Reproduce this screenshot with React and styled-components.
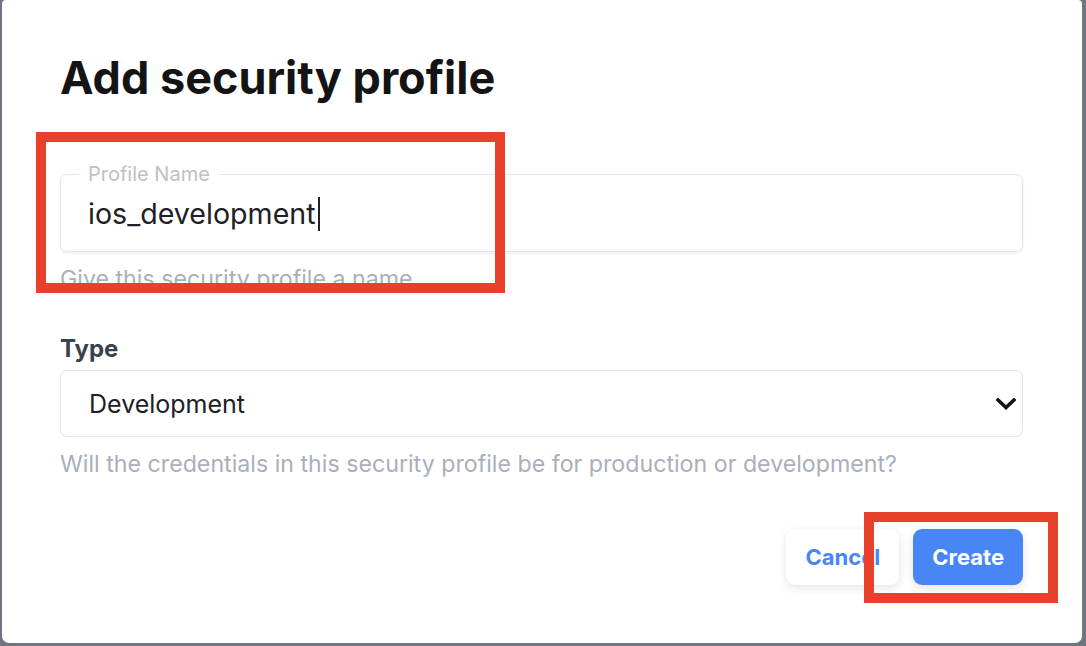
import React from "react";
import styled, { createGlobalStyle } from "styled-components";

const GlobalStyle = createGlobalStyle`
  html, body { margin: 0; padding: 0; }
  body {
    background: #6f7581;
    font-family: Inter, "Noto Sans", sans-serif;
    -webkit-font-smoothing: antialiased;
  }
  * { box-sizing: border-box; }
`;

const Page = styled.div`
  position: relative;
  width: 1086px;
  height: 646px;
  padding: 0 4px 3px 2px;
  overflow: hidden;
`;

const Modal = styled.div`
  height: 100%;
  background: #ffffff;
  border-radius: 4px 4px 7px 7px;
  padding: 51px 59px 0 58px;
  display: flex;
  flex-direction: column;
`;

const Title = styled.h1`
  margin: 0;
  font-size: 45px;
  line-height: 54px;
  font-weight: 700;
  color: #141414;
  letter-spacing: 0;
`;

const Fieldset = styled.fieldset`
  margin: 59px 0 0;
  padding: 13px 18px 20px 27px;
  border: 1.5px solid #e1e4ea;
  border-radius: 7px;
  box-shadow: 0 2px 3px rgba(30, 40, 60, 0.06);
  min-width: 0;
`;

const Legend = styled.legend`
  margin-left: -9px;
  padding: 0 9px;
  font-size: 20px;
  line-height: 20px;
  color: #bcc0c9;
`;

const ValueRow = styled.div`
  display: flex;
  align-items: center;
  height: 34px;
  font-size: 28.6px;
  line-height: 34px;
  color: #1d2026;
`;

const Caret = styled.span`
  display: inline-block;
  width: 2px;
  height: 34px;
  margin-left: 2px;
  background: #1d2026;
`;

const Helper = styled.p`
  margin: ${(p) => p.$top}px 0 0;
  font-size: 23.2px;
  line-height: 28px;
  color: #a9afbb;
`;

const Label = styled.div`
  margin-top: 41px;
  font-size: 24px;
  line-height: 30px;
  font-weight: 700;
  color: #3b414b;
`;

const SelectBox = styled.div`
  margin-top: 6px;
  height: 67px;
  display: flex;
  align-items: center;
  justify-content: space-between;
  padding: 0 6px 0 28px;
  border: 1.5px solid #e1e4ea;
  border-radius: 7px;
  font-size: 25px;
  color: #1d2026;
`;

const Actions = styled.div`
  margin-top: 51px;
  display: flex;
  justify-content: flex-end;
  gap: 14px;
`;

const Button = styled.button`
  height: 56px;
  padding: 0 19px;
  border: none;
  border-radius: 9px;
  font-family: inherit;
  font-size: 22px;
  font-weight: 700;
  cursor: pointer;
  background: ${(p) => (p.$primary ? "#4886f5" : "#ffffff")};
  color: ${(p) => (p.$primary ? "#ffffff" : "#4886f5")};
  box-shadow: 0 3px 10px rgba(20, 30, 50, 0.12);
`;

const Highlight = styled.div`
  position: absolute;
  border: 10px solid #e8402a;
  pointer-events: none;
`;

function Chevron() {
  return (
    <svg width="20" height="12" viewBox="0 0 20 12">
      <polyline
        points="2,2 10,9.5 18,2"
        fill="none"
        stroke="#151515"
        strokeWidth="3.6"
        strokeLinecap="square"
      />
    </svg>
  );
}

export default function App() {
  return (
    <>
      <GlobalStyle />
      <Page>
        <Modal>
          <Title>Add security profile</Title>
          <Fieldset>
            <Legend>Profile Name</Legend>
            <ValueRow>
              ios_development
              <Caret />
            </ValueRow>
          </Fieldset>
          <Helper $top={13}>Give this security profile a name</Helper>
          <Label>Type</Label>
          <SelectBox>
            <span>Development</span>
            <Chevron />
          </SelectBox>
          <Helper $top={13}>
            Will the credentials in this security profile be for production or development?
          </Helper>
          <Actions>
            <Button>Cancel</Button>
            <Button $primary>Create</Button>
          </Actions>
        </Modal>
        <Highlight style={{ left: 36, top: 132, width: 469, height: 161 }} />
        <Highlight style={{ left: 864, top: 512, width: 194, height: 91 }} />
      </Page>
    </>
  );
}
